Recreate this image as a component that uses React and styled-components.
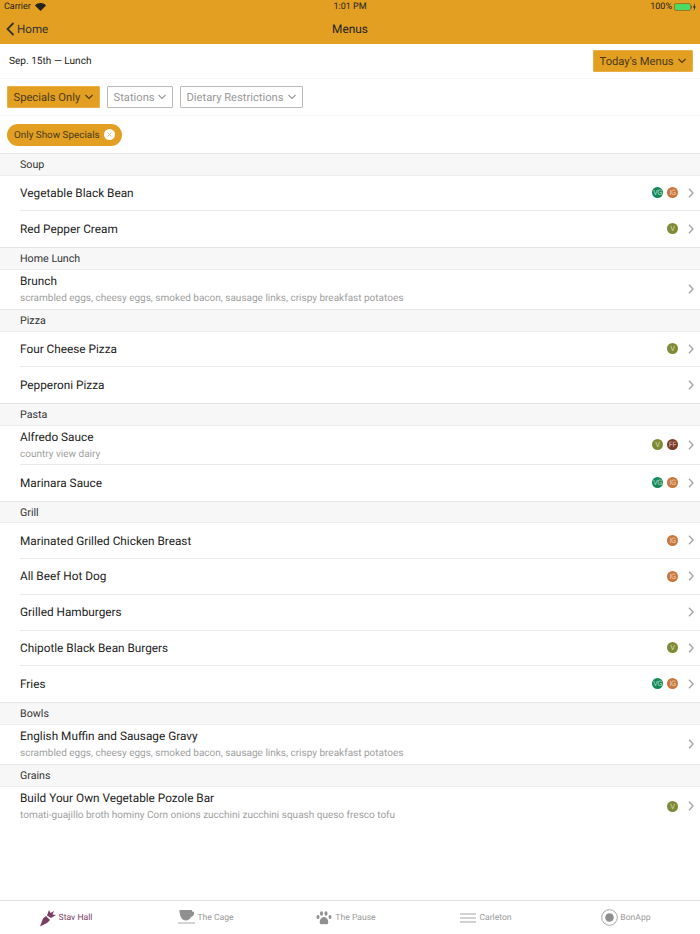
import React from "react";
import styled, { createGlobalStyle } from "styled-components";

const Global = createGlobalStyle`
  html, body { margin: 0; padding: 0; background: #fff; }
  body { font-family: Roboto, Inter, "Noto Sans", sans-serif; color: #222; text-rendering: geometricPrecision; }
  * { box-sizing: border-box; }
`;
const Page = styled.div`
  width: 700px; height: 934px; display: flex; flex-direction: column; overflow: hidden; background: #fff;
`;
const Header = styled.header`
  height: 44px; background: #e29f22; display: flex; flex-direction: column; flex: none;
`;
const StatusBar = styled.div`
  height: 14px; padding: 0 4px; display: grid; grid-template-columns: 1fr auto 1fr; align-items: center;
  font-size: 9px; color: #222;
`;
const StatusLeft = styled.div` display: flex; align-items: center; gap: 4px; `;
const StatusRight = styled.div` display: flex; align-items: center; justify-content: flex-end; gap: 2px; `;
const NavBar = styled.div`
  flex: 1; display: grid; grid-template-columns: 1fr auto 1fr; align-items: center; padding: 0 6px;
`;
const Back = styled.div` display: flex; align-items: center; gap: 2px; font-size: 11.6px; color: #333; `;
const Title = styled.div` font-size: 11.9px; color: #222; `;
const DateRow = styled.div`
  height: 35px; flex: none; display: flex; justify-content: space-between; align-items: center;
  padding: 0 7px 0 9px; border-bottom: 1px solid #f5f5f5; font-size: 10.1px; color: #222;
`;
const DateText = styled.span` padding-top: 1px; `;
const FilterRow = styled.div`
  height: 37px; flex: none; display: flex; align-items: center; gap: 7px; padding: 0 7px;
  border-bottom: 1px solid #f5f5f5;
`;
const Drop = styled.div`
  height: 22px; display: flex; align-items: center; justify-content: space-between; padding: 0 5px 0 5.5px;
  width: ${p => p.$w}px; font-size: 11.2px; border-radius: 1px; white-space: nowrap;
  background: ${p => (p.$active ? "#e29f22" : "#fff")};
  color: ${p => (p.$active ? "#4a3a1a" : "#999")};
  border: 1px solid ${p => (p.$active ? "#e8ae47" : "#bbb")};
`;
const ChipRow = styled.div`
  height: 37px; flex: none; display: flex; align-items: center; padding: 0 7px;
`;
const Chip = styled.div`
  height: 22px; width: 115px; border-radius: 11px; background: #e29f22; color: #4a3a1a; font-size: 9.9px;
  display: flex; align-items: center; justify-content: space-between; padding: 0 7px;
`;
const ChipLabel = styled.span` padding-top: 1px; `;
const ChipX = styled.span`
  width: 11px; height: 11px; border-radius: 50%; background: #fff; display: flex; align-items: center; justify-content: center;
`;
const List = styled.div` flex: 1; `;
const SectionHead = styled.div`
  height: 22.5px; background: #f7f7f7; border-top: 1px solid #e4e4e4; border-bottom: 1px solid #ececec; display: flex; align-items: center;
  padding-left: 20px; font-size: 10.7px; color: #333;
`;
const Row = styled.div`
  height: ${p => p.$h}px; display: flex; align-items: center; padding-left: 20px;
`;
const RowInner = styled.div`
  flex: 1; height: 100%; display: flex; align-items: center; justify-content: space-between; padding-right: 6px;
  border-bottom: ${p => (p.$last ? "none" : "1px solid #e9e9e9")};
`;
const Texts = styled.div` display: flex; flex-direction: column; gap: 5px; `;
const Name = styled.div` font-size: 11.8px; line-height: 14px; color: #222; `;
const Desc = styled.div` font-size: 10px; line-height: 11px; color: #a0a0a0; `;
const Right = styled.div` display: flex; align-items: center; gap: 10px; margin-top: -0.5px; `;
const Badges = styled.div` display: flex; gap: 4px; `;
const Badge = styled.span`
  width: 11px; height: 11px; border-radius: 50%; background: ${p => p.$c}; color: rgba(255,255,255,.65);
  font-size: 7.5px; display: flex; align-items: center; justify-content: center; letter-spacing: -.5px;
`;
const TabBar = styled.nav`
  height: 34px; flex: none; border-top: 1px solid #e0e0e0; display: grid; grid-template-columns: repeat(5, 1fr); background: #fff;
`;
const Tab = styled.div`
  display: flex; align-items: center; justify-content: center; gap: ${p => p.$gap ?? 3}px; font-size: 8.6px;
  padding-right: 8px;
  color: ${p => (p.$active ? "#7a3d63" : "#9a9a9a")};
`;

const Chev = ({ c = "#4a3a1a" }) => (
  <svg width="10" height="6" viewBox="0 0 10 6"><path d="M1.500 1L5 4.500 8.500 1" fill="none" stroke={c} strokeWidth="1.100" /></svg>
);
const Disc = () => (
  <svg width="6" height="10" viewBox="0 0 6 10"><path d="M1 .7L5 5 1 9.300" fill="none" stroke="#a3a3a3" strokeWidth="1.300" /></svg>
);

const colors = { VG: "#128a57", IG: "#c8763a", V: "#7f8a36", FF: "#7b3a26" };
const R = 35.75;
const T = 39.5;

const data = [
  ["Soup", [["Vegetable Black Bean", "", ["VG", "IG"], R], ["Red Pepper Cream", "", ["V"], R]]],
  ["Home Lunch", [["Brunch", "scrambled eggs, cheesy eggs, smoked bacon, sausage links, crispy breakfast potatoes", [], T]]],
  ["Pizza", [["Four Cheese Pizza", "", ["V"], R], ["Pepperoni Pizza", "", [], R]]],
  ["Pasta", [["Alfredo Sauce", "country view dairy", ["V", "FF"], T], ["Marinara Sauce", "", ["VG", "IG"], R]]],
  ["Grill", [["Marinated Grilled Chicken Breast", "", ["IG"], R], ["All Beef Hot Dog", "", ["IG"], R], ["Grilled Hamburgers", "", [], R], ["Chipotle Black Bean Burgers", "", ["V"], R], ["Fries", "", ["VG", "IG"], R]]],
  ["Bowls", [["English Muffin and Sausage Gravy", "scrambled eggs, cheesy eggs, smoked bacon, sausage links, crispy breakfast potatoes", [], T]]],
  ["Grains", [["Build Your Own Vegetable Pozole Bar", "tomati-guajillo broth hominy Corn onions zucchini zucchini squash queso fresco tofu", ["V"], T]]],
];

export default function App() {
  return (
    <Page>
      <Global />
      <Header>
        <StatusBar>
          <StatusLeft>
            Carrier
            <svg width="11" height="8" viewBox="0 0 11 8"><path d="M5.500 8L0 2.400C3-.8 8-.8 11 2.400z" fill="#222" /></svg>
          </StatusLeft>
          <div>1:01 PM</div>
          <StatusRight>
            100%
            <svg width="22" height="8" viewBox="0 0 22 8">
              <rect x=".5" y=".5" width="16" height="7" rx="1.500" fill="#4cd964" stroke="#9a7a20" />
              <rect x="17" y="2.500" width="1" height="3" fill="#7a6a20" />
              <path d="M21 0l-2 4.500h1.200L19.600 8l2.200-4.600h-1.200z" fill="#222" />
            </svg>
          </StatusRight>
        </StatusBar>
        <NavBar>
          <Back>
            <svg width="9" height="14" viewBox="0 0 9 14"><path d="M7.500 1L1.500 7l6 6" fill="none" stroke="#333" strokeWidth="1.800" /></svg>
            Home
          </Back>
          <Title>Menus</Title>
          <div />
        </NavBar>
      </Header>
      <DateRow>
        <DateText>Sep. 15th — Lunch</DateText>
        <Drop $active $w={100}>Today's Menus <Chev /></Drop>
      </DateRow>
      <FilterRow>
        <Drop $active $w={93}>Specials Only <Chev /></Drop>
        <Drop $w={66}>Stations <Chev c="#999" /></Drop>
        <Drop $w={123}>Dietary Restrictions <Chev c="#999" /></Drop>
      </FilterRow>
      <ChipRow>
        <Chip>
          <ChipLabel>Only Show Specials</ChipLabel>
          <ChipX>
            <svg width="5" height="5" viewBox="0 0 5 5"><path d="M.5.5l4 4M4.500.5l-4 4" stroke="#e2b35c" strokeWidth=".8" /></svg>
          </ChipX>
        </Chip>
      </ChipRow>
      <List>
        {data.map(([head, rows]) => (
          <React.Fragment key={head}>
            <SectionHead>{head}</SectionHead>
            {rows.map(([name, desc, badges, h], i) => (
              <Row key={name} $h={h}>
                <RowInner $last={i === rows.length - 1}>
                  <Texts>
                    <Name>{name}</Name>
                    {desc && <Desc>{desc}</Desc>}
                  </Texts>
                  <Right>
                    <Badges>
                      {badges.map(b => <Badge key={b} $c={colors[b]}>{b}</Badge>)}
                    </Badges>
                    <Disc />
                  </Right>
                </RowInner>
              </Row>
            ))}
          </React.Fragment>
        ))}
      </List>
      <TabBar>
        <Tab $active>
          <svg width="16" height="18" viewBox="0 0 16 18"><path d="M0 17.500l3-8 3-2.500 4 4-3 3zM7 6.500L9 1l1.500 3L14 2l-1.500 3.500L16 6l-5 3z" fill="#7a3d63" /></svg>
          Stav Hall
        </Tab>
        <Tab $gap={1}>
          <svg width="18" height="15" viewBox="0 0 18 15"><path d="M1.500 0h12.500v1.500h1c2 0 1.500 4.500-2 5.500-1 2-3 3.500-5 3.500-4 0-6.500-4-6.500-10z" fill="#8f8f8f" /><path d="M0 13h17" stroke="#aaa" /></svg>
          The Cage
        </Tab>
        <Tab>
          <svg width="16" height="14" viewBox="0 0 16 14" fill="#8f8f8f"><ellipse cx="2" cy="6" rx="1.500" ry="2" /><ellipse cx="5.500" cy="2.500" rx="1.500" ry="2.200" /><ellipse cx="10" cy="2.500" rx="1.500" ry="2.200" /><ellipse cx="14" cy="6" rx="1.500" ry="2" /><path d="M8 6c3 0 5 4 4 6.500-1 1.500-3 .5-4 .5s-3 1-4-.5C3 10 5 6 8 6z" /></svg>
          The Pause
        </Tab>
        <Tab $gap={3}>
          <svg width="16" height="10" viewBox="0 0 16 10"><path d="M0 1h16M0 5h16M0 9h16" stroke="#a5a5a5" /></svg>
          Carleton
        </Tab>
        <Tab $gap={2}>
          <svg width="17" height="17" viewBox="0 0 17 17"><circle cx="8.500" cy="8.500" r="7.800" fill="none" stroke="#a5a5a5" /><circle cx="8.500" cy="8.500" r="4.300" fill="#8f8f8f" /></svg>
          BonApp
        </Tab>
      </TabBar>
    </Page>
  );
}
